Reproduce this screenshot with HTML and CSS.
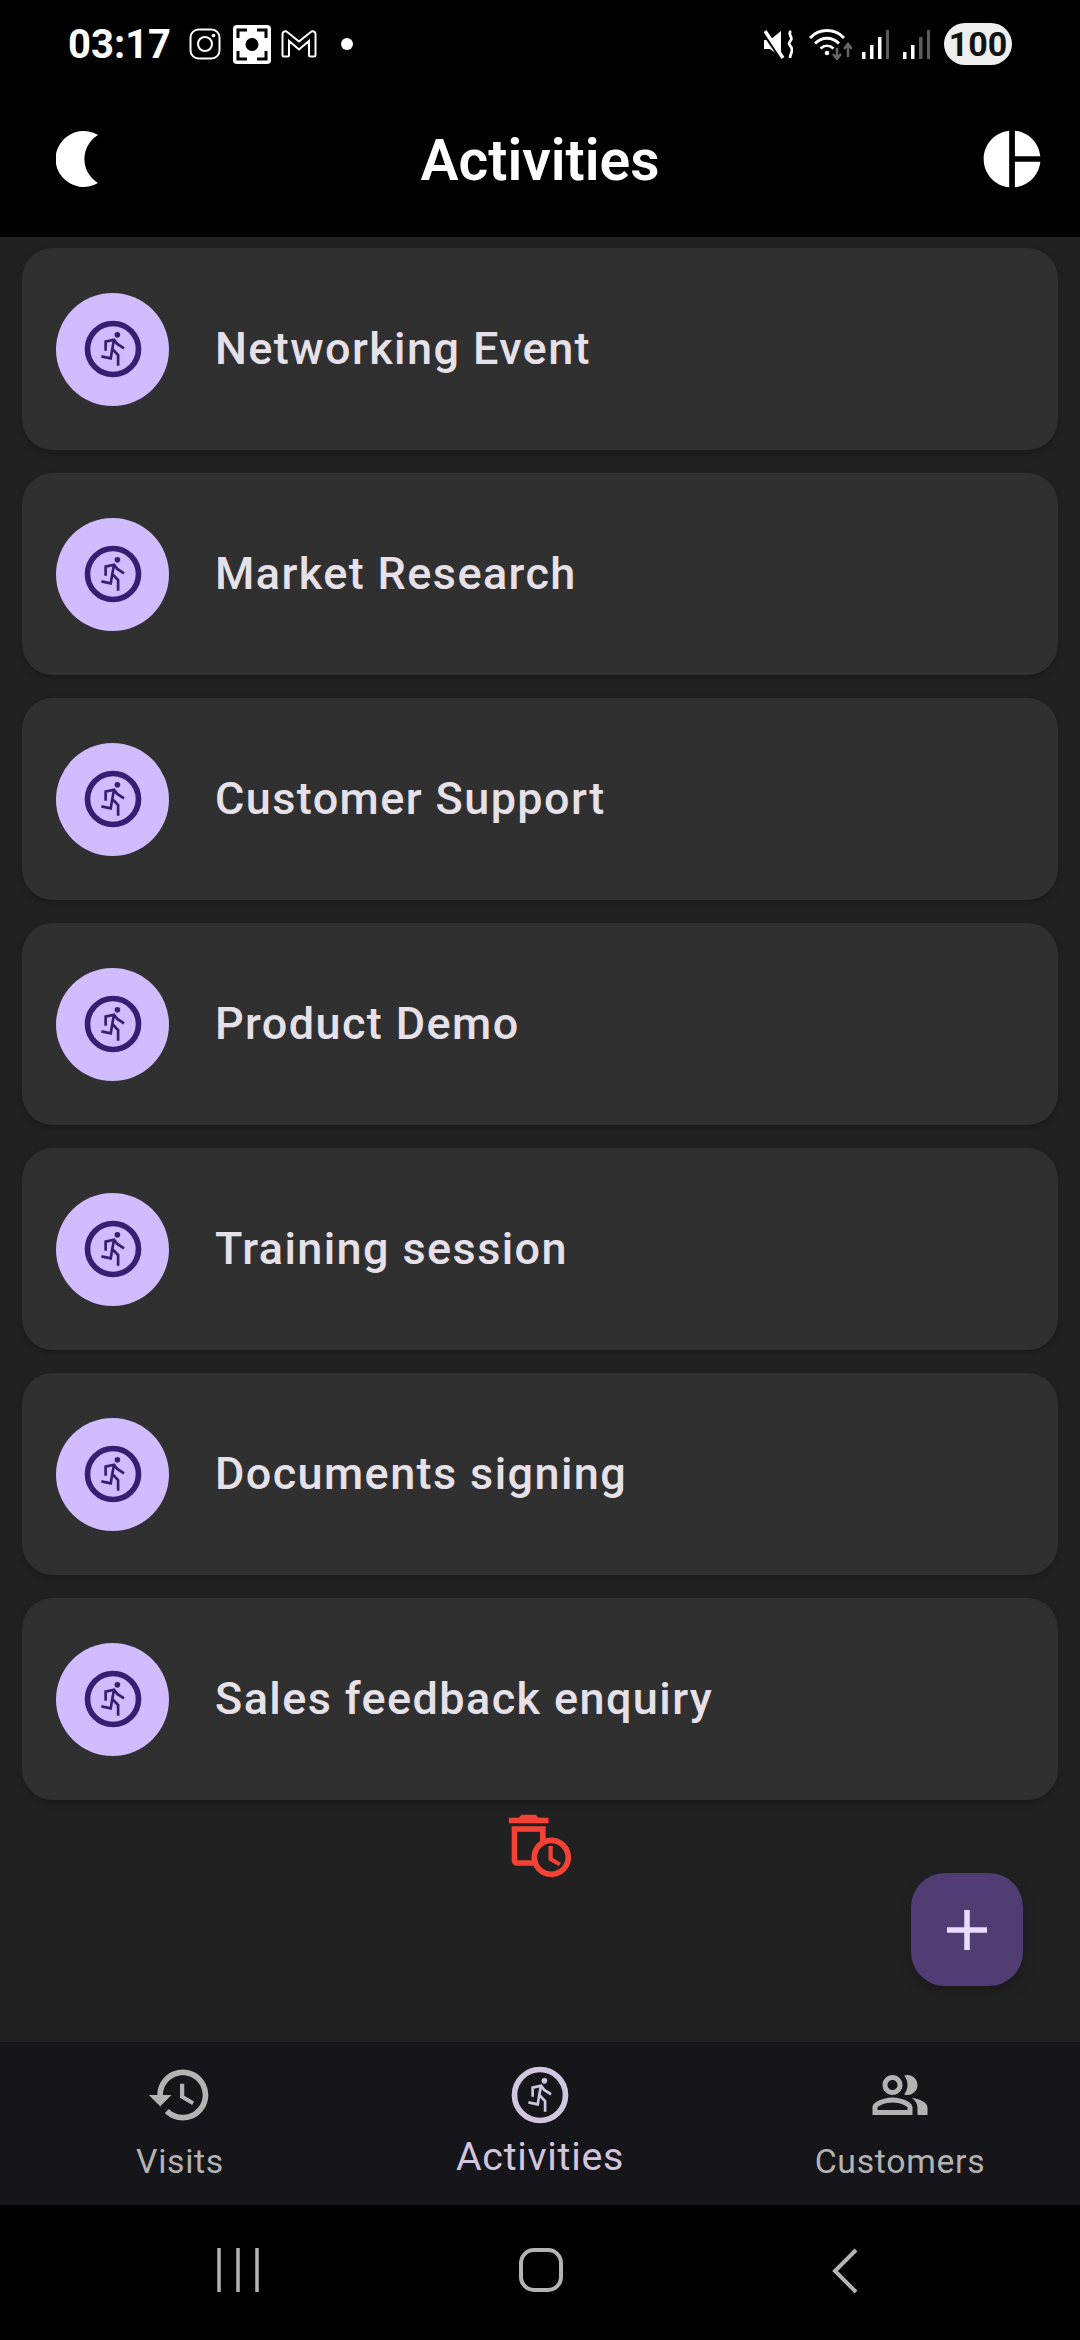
FILE: index.html
```html
<!DOCTYPE html>
<html lang="en">
<head>
  <meta charset="UTF-8">
  <title>Activities</title>
  <meta name="viewport" content="width=device-width, initial-scale=1.0">
  <link rel="stylesheet" href="styles.css">
</head>
<body>
  <svg class="icon-defs" aria-hidden="true">
    <symbol id="run-circle" viewBox="0 0 24 24">
      <circle cx="12" cy="12" r="9" fill="none" stroke="currentColor" stroke-width="2"/>
      <circle cx="13.55" cy="7" r="1" fill="currentColor"/>
      <path d="M9.400 12.600V9.400L12.350 8.700l1.150 1.500 2.400 1.600M12.350 8.700L11.750 12 11.200 15.300 7.900 14.600M11.750 12L13.800 14.100V17.900" fill="none" stroke="currentColor" stroke-width=".95"/>
    </symbol>
  </svg>

  <header class="top">
    <div class="status">
      <span class="time">03:17</span>
      <svg class="st-insta" viewBox="0 0 32 32"><rect x="1.500" y="1.500" width="29" height="29" rx="8" fill="none" stroke="#fff" stroke-width="2"/><circle cx="16" cy="16" r="7" fill="none" stroke="#fff" stroke-width="2"/><circle cx="24.500" cy="7.500" r="1.800" fill="#fff"/></svg>
      <svg class="st-shot" viewBox="0 0 38 39"><rect width="38" height="39" rx="4" fill="#fff"/><path d="M5 13V5h9M24 5h9v8M33 26v8h-9M14 34H5v-8" fill="none" stroke="#000" stroke-width="3"/><circle cx="19" cy="19.500" r="6.500" fill="#000"/></svg>
      <svg class="st-mail" viewBox="0 0 36 28"><path d="M1.500 4c0-2.500 3-3.500 5-1.800L18 11.500 29.500 2.200c2-1.700 5-.7 5 1.800v21c0 1-.7 1.500-1.500 1.500h-3.500c-.8 0-1.500-.5-1.500-1.500V11L18 19.500 8 11v14c0 1-.7 1.500-1.500 1.500H3c-.8 0-1.500-.5-1.500-1.500z" fill="none" stroke="#fff" stroke-width="2"/></svg>
      <span class="st-dot"></span>
      <span class="st-space"></span>
      <svg class="st-mute" viewBox="0 0 29 29"><path d="M0 10h6l11-9v26L6 19H0z" fill="#fff"/><path d="M0 3l17 25" stroke="#000" stroke-width="4"/><path d="M1 1l18 27" stroke="#fff" stroke-width="3.500"/><path d="M27 1c-4 3 2 6 0 9s-3 3 0 7-1 6-1 11" fill="none" stroke="#fff" stroke-width="2.800"/></svg>
      <svg class="st-wifi" viewBox="0 0 44 32"><path d="M2 10C11 0 27 0 36 10M7 15.500c7-7 17-7 24 0M12.500 20.500c4-3.500 9-3.500 13 0" fill="none" stroke="#fff" stroke-width="2.800"/><circle cx="19" cy="25" r="2.300" fill="#fff"/><path d="M29 20v9M25 26l4 5 4-5" fill="none" stroke="#666" stroke-width="2.500"/><path d="M40 29v-11M36 21l4-5 4 5" fill="none" stroke="#666" stroke-width="2.500"/></svg>
      <svg class="st-signal" viewBox="0 0 27 29"><rect x="0" y="22" width="3.500" height="7" fill="#fff"/><rect x="8" y="15" width="3.500" height="14" fill="#fff"/><rect x="16" y="7" width="3.500" height="22" fill="#fff"/><rect x="24" y="0" width="3" height="29" fill="#5c5c5c"/></svg>
      <svg class="st-signal" viewBox="0 0 27 29"><rect x="0" y="22" width="3.500" height="7" fill="#fff"/><rect x="8" y="15" width="3.500" height="14" fill="#fff"/><rect x="16" y="7" width="3.500" height="22" fill="#5c5c5c"/><rect x="24" y="0" width="3" height="29" fill="#5c5c5c"/></svg>
      <span class="battery">100</span>
    </div>
    <div class="appbar">
      <svg class="moon" viewBox="0 0 42 56"><path d="M42 4A28 28 0 1 0 42 52A28 28 0 0 1 42 4Z" fill="#fff"/></svg>
      <h1>Activities</h1>
      <svg class="pie" viewBox="0 0 24 24"><path fill="#fff" d="M11 2v20c-5.070-.5-9-4.790-9-10s3.930-9.500 9-10zm2.030 0v8.990H22c-.47-4.740-4.240-8.520-8.970-8.990zm0 11.010V22c4.740-.47 8.500-4.250 8.970-8.990h-8.970z"/></svg>
    </div>
  </header>

  <main class="content">
    <ul class="list">
      <li class="card"><span class="avatar"><svg><use href="#run-circle"/></svg></span><span class="card-title">Networking Event</span></li>
      <li class="card"><span class="avatar"><svg><use href="#run-circle"/></svg></span><span class="card-title">Market Research</span></li>
      <li class="card"><span class="avatar"><svg><use href="#run-circle"/></svg></span><span class="card-title">Customer Support</span></li>
      <li class="card"><span class="avatar"><svg><use href="#run-circle"/></svg></span><span class="card-title">Product Demo</span></li>
      <li class="card"><span class="avatar"><svg><use href="#run-circle"/></svg></span><span class="card-title">Training session</span></li>
      <li class="card"><span class="avatar"><svg><use href="#run-circle"/></svg></span><span class="card-title">Documents signing</span></li>
      <li class="card"><span class="avatar"><svg><use href="#run-circle"/></svg></span><span class="card-title">Sales feedback enquiry</span></li>
    </ul>
    <div class="deleted">
      <svg viewBox="0 0 24 24"><path fill="#f44336" d="M15 2h-3.500l-1-1h-5l-1 1H1v2h14zM16 9c-.7 0-1.370.1-2 .29V5H2v12c0 1.100.9 2 2 2h5.680c1.120 2.360 3.530 4 6.320 4 3.870 0 7-3.130 7-7s-3.130-7-7-7zm-7 7c0 .34.03.67.08 1H4V7h8v3.260c-1.810 1.270-3 3.360-3 5.740zm7 5c-2.760 0-5-2.240-5-5s2.240-5 5-5 5 2.240 5 5-2.240 5-5 5z"/><path fill="#f44336" d="M16.500 12H15v5l3.600 2.100.8-1.200-2.900-1.700z"/></svg>
    </div>
    <button class="fab" aria-label="Add">
      <svg viewBox="0 0 40 40"><path d="M20 0v40M0 20h40" stroke="#eaddff" stroke-width="5.500"/></svg>
    </button>
  </main>

  <nav class="tabs">
    <div class="tab">
      <svg viewBox="0 0 24 24"><path fill="currentColor" d="M13 3c-4.970 0-9 4.030-9 9H1l3.890 3.890.07.14L9 12H6c0-3.870 3.130-7 7-7s7 3.130 7 7-3.130 7-7 7c-1.930 0-3.680-.79-4.940-2.060l-1.420 1.420C8.270 19.990 10.510 21 13 21c4.970 0 9-4.030 9-9s-4.030-9-9-9zm-1 5v5l4.280 2.540.72-1.210-3.500-2.080V8H12z"/></svg>
      <span>Visits</span>
    </div>
    <div class="tab active">
      <svg><use href="#run-circle"/></svg>
      <span>Activities</span>
    </div>
    <div class="tab">
      <svg class="tab-people" viewBox="0 0 24 24"><path fill="currentColor" d="M16.670 13.130C18.040 14.060 19 15.320 19 17v3h4v-3c0-2.180-3.570-3.470-6.330-3.870zM15 12c2.210 0 4-1.790 4-4s-1.790-4-4-4c-.47 0-.91.1-1.330.24C14.500 5.270 15 6.580 15 8s-.5 2.730-1.330 3.760c.42.14.86.24 1.330.24zM9 12c2.210 0 4-1.790 4-4s-1.790-4-4-4-4 1.790-4 4 1.790 4 4 4zm0-6c1.100 0 2 .9 2 2s-.9 2-2 2-2-.9-2-2 .9-2 2-2zM9 13c-2.670 0-8 1.340-8 4v3h16v-3c0-2.660-5.330-4-8-4zm6 5H3v-.99C3.200 16.290 6.300 15 9 15s5.800 1.290 6 2v1z"/></svg>
      <span>Customers</span>
    </div>
  </nav>

  <footer class="sysnav">
    <svg class="sys-recents" viewBox="0 0 42 44"><path d="M2 0v44M21 0v44M40 0v44" stroke="#b4b4b4" stroke-width="3.500"/></svg>
    <svg class="sys-home" viewBox="0 0 44 44"><rect x="2" y="2" width="40" height="40" rx="13" fill="none" stroke="#b4b4b4" stroke-width="4"/></svg>
    <svg class="sys-back" viewBox="0 0 26 46"><path d="M24 2L3 23l21 21" fill="none" stroke="#b4b4b4" stroke-width="4"/></svg>
  </footer>
</body>
</html>
```

FILE: styles.css
```css
* {
  box-sizing: border-box;
}
body {
  margin: 0;
  width: 1080px;
  height: 2340px;
  display: flex;
  flex-direction: column;
  background: #212121;
  font-family: Roboto, "Noto Sans", sans-serif;
  overflow: hidden;
}
svg {
  display: block;
  flex: none;
}
.icon-defs {
  position: absolute;
  width: 0;
  height: 0;
}

/* status bar + app bar */
.top {
  height: 237px;
  background: #000;
  color: #fff;
}
.status {
  height: 80px;
  padding: 8px 68px 0 68px;
  display: flex;
  align-items: center;
}
.time {
  font-size: 40px;
  font-weight: 700;
  width: 121px;
}
.st-insta {
  width: 32px;
  height: 32px;
}
.st-shot {
  width: 38px;
  height: 39px;
  margin-left: 12px;
}
.st-mail {
  width: 36px;
  height: 28px;
  margin-left: 10px;
}
.st-dot {
  width: 12px;
  height: 12px;
  border-radius: 50%;
  background: #fff;
  margin-left: 24px;
}
.st-space {
  flex: 1;
}
.st-mute {
  width: 29px;
  height: 29px;
}
.st-wifi {
  width: 44px;
  height: 32px;
  margin-left: 15px;
}
.st-signal {
  width: 27px;
  height: 29px;
  margin-left: 10px;
}
.st-signal + .st-signal {
  margin-left: 14px;
}
.battery {
  margin-left: 14px;
  width: 68px;
  height: 42px;
  border-radius: 21px;
  background: #eee;
  color: #111;
  font-size: 34px;
  font-weight: 700;
  line-height: 42px;
  text-align: center;
}
.appbar {
  height: 157px;
  padding: 0 34px;
  display: grid;
  grid-template-columns: 1fr auto 1fr;
  align-items: center;
}
.moon {
  width: 42px;
  height: 56px;
  margin-left: 22px;
}
.appbar h1 {
  margin: 0 0 -3px;
  font-size: 57px;
  font-weight: 600;
}
.pie {
  width: 68px;
  height: 68px;
  justify-self: end;
}

/* list */
.content {
  flex: 1;
  position: relative;
  padding-top: 11px;
}
.list {
  list-style: none;
  margin: 0;
  padding: 0 22px;
  display: flex;
  flex-direction: column;
  gap: 23px;
}
.card {
  height: 202px;
  padding-left: 34px;
  display: flex;
  align-items: center;
  gap: 46px;
  background: #303030;
  border-radius: 31px;
  box-shadow: 0 3px 6px rgba(0, 0, 0, .22);
}
.avatar {
  width: 113px;
  height: 113px;
  border-radius: 50%;
  background: #d0bcff;
  color: #381e72;
  display: flex;
  align-items: center;
  justify-content: center;
}
.avatar svg {
  width: 68px;
  height: 68px;
}
.card-title {
  font-size: 45px;
  font-weight: 500;
  letter-spacing: 1.400px;
  color: #e6e0e9;
  margin-bottom: 2px;
}
.deleted {
  display: flex;
  justify-content: center;
  margin-top: 12px;
}
.deleted svg {
  width: 68px;
  height: 68px;
}
.fab {
  position: absolute;
  right: 57px;
  bottom: 56px;
  width: 112px;
  height: 113px;
  padding: 0;
  border: none;
  border-radius: 34px;
  background: #4f3d74;
  box-shadow: 0 6px 14px rgba(0, 0, 0, .22);
  display: flex;
  align-items: center;
  justify-content: center;
}
.fab svg {
  width: 40px;
  height: 40px;
}

/* bottom navigation */
.tabs {
  height: 163px;
  background: #16151a;
  display: grid;
  grid-template-columns: repeat(3, 1fr);
}
.tab {
  padding-top: 19px;
  display: flex;
  flex-direction: column;
  align-items: center;
  color: #b3b3b3;
  font-size: 33.750px;
  letter-spacing: .7px;
}
.tab svg {
  width: 68px;
  height: 68px;
}
.tab .tab-people {
  width: 60px;
  height: 60px;
  margin: 4px 0;
}
.tab span {
  margin-top: 13px;
}
.tab.active {
  color: #d0c6e0;
  font-size: 39.400px;
}
.tab.active span {
  margin-top: 4px;
}

/* android nav */
.sysnav {
  height: 135px;
  background: #000;
  position: relative;
}
.sysnav svg {
  position: absolute;
  top: 43px;
}
.sys-recents {
  left: 217px;
  width: 42px;
  height: 44px;
}
.sys-home {
  left: 519px;
  width: 44px;
  height: 44px;
}
.sys-back {
  left: 832px;
  width: 26px;
  height: 46px;
}
```
